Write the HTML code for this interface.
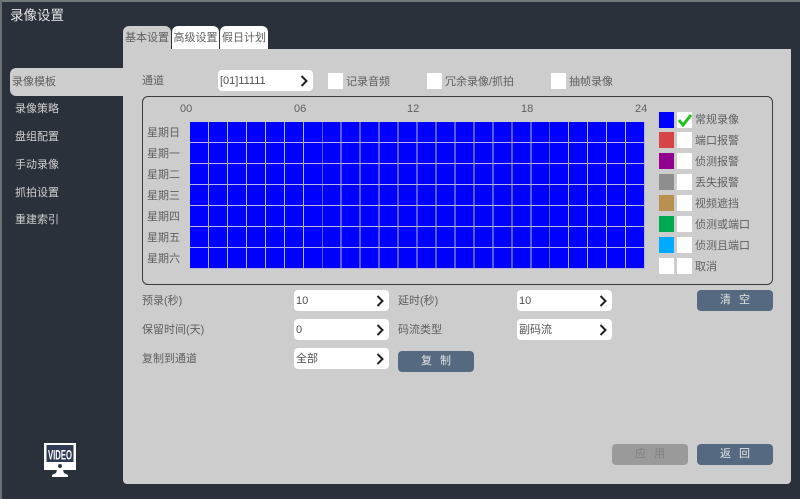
<!DOCTYPE html>
<html><head><meta charset="utf-8">
<style>
*{box-sizing:border-box;margin:0;padding:0}
html,body{width:800px;height:499px;overflow:hidden;background:#2a313a}
body{font-family:"Liberation Sans","Noto Sans CJK SC",sans-serif;font-size:11px;color:#606060}
#w{position:absolute;left:0;top:0;width:800px;height:499px;background:#2a313a;filter:blur(.35px)}
.a{position:absolute;white-space:nowrap;line-height:16px}
.s{color:#d0d0d0}
.sel{background:#fff;border-radius:4px;height:21px;color:#505050;padding-left:2px;line-height:22px;width:95px}
.sel svg{position:absolute;right:4px;top:5px}
.cb{background:#fff;width:15px;height:16px}
.sw{width:15px;height:16px}
.btn{background:#556a80;border-radius:4px;color:#e4e4e4;text-align:center;line-height:21px;height:21px;width:76px;letter-spacing:8px;padding-left:8px}
</style></head><body><div id="w">
<div class="a" style="left:0;top:0;width:800px;height:2px;background:#73797a"></div>
<div class="a" style="left:0;top:0;width:2px;height:499px;background:#6b7173"></div>
<div class="a" style="left:10px;top:6px;font-size:13.500px;line-height:20px;color:#e4e4e4">录像设置</div>

<div class="a" style="left:123px;top:49px;width:668px;height:435px;background:#cdcdcd;border-radius:0 0 4px 4px"></div>
<div class="a" style="left:123px;top:26px;width:48px;height:26px;background:#cdcdcd;border-radius:6px 6px 0 0;text-align:center;line-height:24px">基本设置</div>
<div class="a" style="left:172px;top:26px;width:47px;height:23px;background:#fff;border-radius:6px 6px 0 0;text-align:center;line-height:24px">高级设置</div>
<div class="a" style="left:220px;top:26px;width:48px;height:23px;background:#fff;border-radius:6px 6px 0 0;text-align:center;line-height:24px">假日计划</div>

<div class="a" style="left:10px;top:68px;width:114px;height:28px;background:#cdcdcd;border-radius:6px 0 0 6px;line-height:28px;padding-left:2px">录像模板</div>
<div class="a s" style="left:15px;top:101px">录像策略</div>
<div class="a s" style="left:15px;top:129px">盘组配置</div>
<div class="a s" style="left:15px;top:157px">手动录像</div>
<div class="a s" style="left:15px;top:185px">抓拍设置</div>
<div class="a s" style="left:15px;top:212px">重建索引</div>

<svg class="a" style="left:43px;top:441px" width="34" height="36" viewBox="0 0 34 36">
<path d="M1 2h32v27H20l1 3 4 2v2H9v-2l4-2 1-3H1z" fill="#fff"/>
<rect x="3.500" y="4" width="27" height="17" fill="#2f3a55"/>
<text x="17" y="18.500" text-anchor="middle" font-family="Liberation Sans" font-size="14" font-weight="bold" fill="#fff" textLength="24" lengthAdjust="spacingAndGlyphs">VIDEO</text>
<circle cx="17" cy="25" r="2" fill="#2f3a55"/>
</svg>

<div class="a" style="left:142px;top:73px">通道</div>
<div class="a sel" style="left:218px;top:70px">[01]11111<svg width="10" height="12" viewBox="0 0 10 12"><path d="M2.500 1l5 5-5 5" fill="none" stroke="#222" stroke-width="2"/></svg></div>
<div class="a cb" style="left:328px;top:73px"></div><div class="a" style="left:346px;top:74px">记录音频</div>
<div class="a cb" style="left:427px;top:73px"></div><div class="a" style="left:445px;top:74px">冗余录像/抓拍</div>
<div class="a cb" style="left:551px;top:73px"></div><div class="a" style="left:569px;top:74px">抽帧录像</div>

<div class="a" style="left:142px;top:96px;width:631px;height:189px;border:1px solid #3c3c3c;border-radius:6px"></div>
<div class="a" style="left:180px;top:101px">00</div>
<div class="a" style="left:294px;top:101px">06</div>
<div class="a" style="left:407px;top:101px">12</div>
<div class="a" style="left:521px;top:101px">18</div>
<div class="a" style="left:635px;top:101px">24</div>
<div class="a" style="left:147px;top:125px">星期日</div>
<div class="a" style="left:147px;top:146px">星期一</div>
<div class="a" style="left:147px;top:167px">星期二</div>
<div class="a" style="left:147px;top:188px">星期三</div>
<div class="a" style="left:147px;top:209px">星期四</div>
<div class="a" style="left:147px;top:230px">星期五</div>
<div class="a" style="left:147px;top:251px">星期六</div>
<div class="a" style="left:190px;top:122px;width:455px;height:147px;background-color:#0000ff;background-image:repeating-linear-gradient(90deg,transparent 0,transparent 18px,#b4b4dc 18px,#b4b4dc 18.96px),repeating-linear-gradient(180deg,transparent 0,transparent 20px,#b4b4dc 20px,#b4b4dc 21px)"></div>

<div class="a sw" style="left:659px;top:112px;background:#0000ff"></div>
<div class="a sw" style="left:659px;top:132px;background:#d64545"></div>
<div class="a sw" style="left:659px;top:153px;background:#92008f"></div>
<div class="a sw" style="left:659px;top:174px;background:#8e8e8e"></div>
<div class="a sw" style="left:659px;top:195px;background:#b89050"></div>
<div class="a sw" style="left:659px;top:216px;background:#00aa50"></div>
<div class="a sw" style="left:659px;top:237px;background:#00aaff"></div>
<div class="a sw" style="left:659px;top:258px;background:#fff"></div>
<div class="a cb" style="left:677px;top:112px"></div>
<div class="a cb" style="left:677px;top:132px"></div>
<div class="a cb" style="left:677px;top:153px"></div>
<div class="a cb" style="left:677px;top:174px"></div>
<div class="a cb" style="left:677px;top:195px"></div>
<div class="a cb" style="left:677px;top:216px"></div>
<div class="a cb" style="left:677px;top:237px"></div>
<div class="a cb" style="left:677px;top:258px"></div>
<svg class="a" style="left:677px;top:112px" width="16" height="16" viewBox="0 0 16 16"><path d="M2 8l4 5 8-10" fill="none" stroke="#22c01c" stroke-width="3"/></svg>
<div class="a" style="left:695px;top:112px">常规录像</div>
<div class="a" style="left:695px;top:133px">端口报警</div>
<div class="a" style="left:695px;top:154px">侦测报警</div>
<div class="a" style="left:695px;top:175px">丢失报警</div>
<div class="a" style="left:695px;top:196px">视频遮挡</div>
<div class="a" style="left:695px;top:217px">侦测或端口</div>
<div class="a" style="left:695px;top:238px">侦测且端口</div>
<div class="a" style="left:695px;top:259px">取消</div>

<div class="a" style="left:142px;top:293px">预录(秒)</div>
<div class="a sel" style="left:294px;top:290px">10<svg width="10" height="12" viewBox="0 0 10 12"><path d="M2.500 1l5 5-5 5" fill="none" stroke="#222" stroke-width="2"/></svg></div>
<div class="a" style="left:398px;top:293px">延时(秒)</div>
<div class="a sel" style="left:517px;top:290px">10<svg width="10" height="12" viewBox="0 0 10 12"><path d="M2.500 1l5 5-5 5" fill="none" stroke="#222" stroke-width="2"/></svg></div>
<div class="a btn" style="left:697px;top:290px">清空</div>
<div class="a" style="left:142px;top:322px">保留时间(天)</div>
<div class="a sel" style="left:294px;top:319px">0<svg width="10" height="12" viewBox="0 0 10 12"><path d="M2.500 1l5 5-5 5" fill="none" stroke="#222" stroke-width="2"/></svg></div>
<div class="a" style="left:398px;top:322px">码流类型</div>
<div class="a sel" style="left:517px;top:319px">副码流<svg width="10" height="12" viewBox="0 0 10 12"><path d="M2.500 1l5 5-5 5" fill="none" stroke="#222" stroke-width="2"/></svg></div>
<div class="a" style="left:142px;top:351px">复制到通道</div>
<div class="a sel" style="left:294px;top:348px">全部<svg width="10" height="12" viewBox="0 0 10 12"><path d="M2.500 1l5 5-5 5" fill="none" stroke="#222" stroke-width="2"/></svg></div>
<div class="a btn" style="left:398px;top:351px">复制</div>
<div class="a btn" style="left:612px;top:444px;background:#9a9a9a;color:#808080">应用</div>
<div class="a btn" style="left:697px;top:444px">返回</div>
</div></body></html>
